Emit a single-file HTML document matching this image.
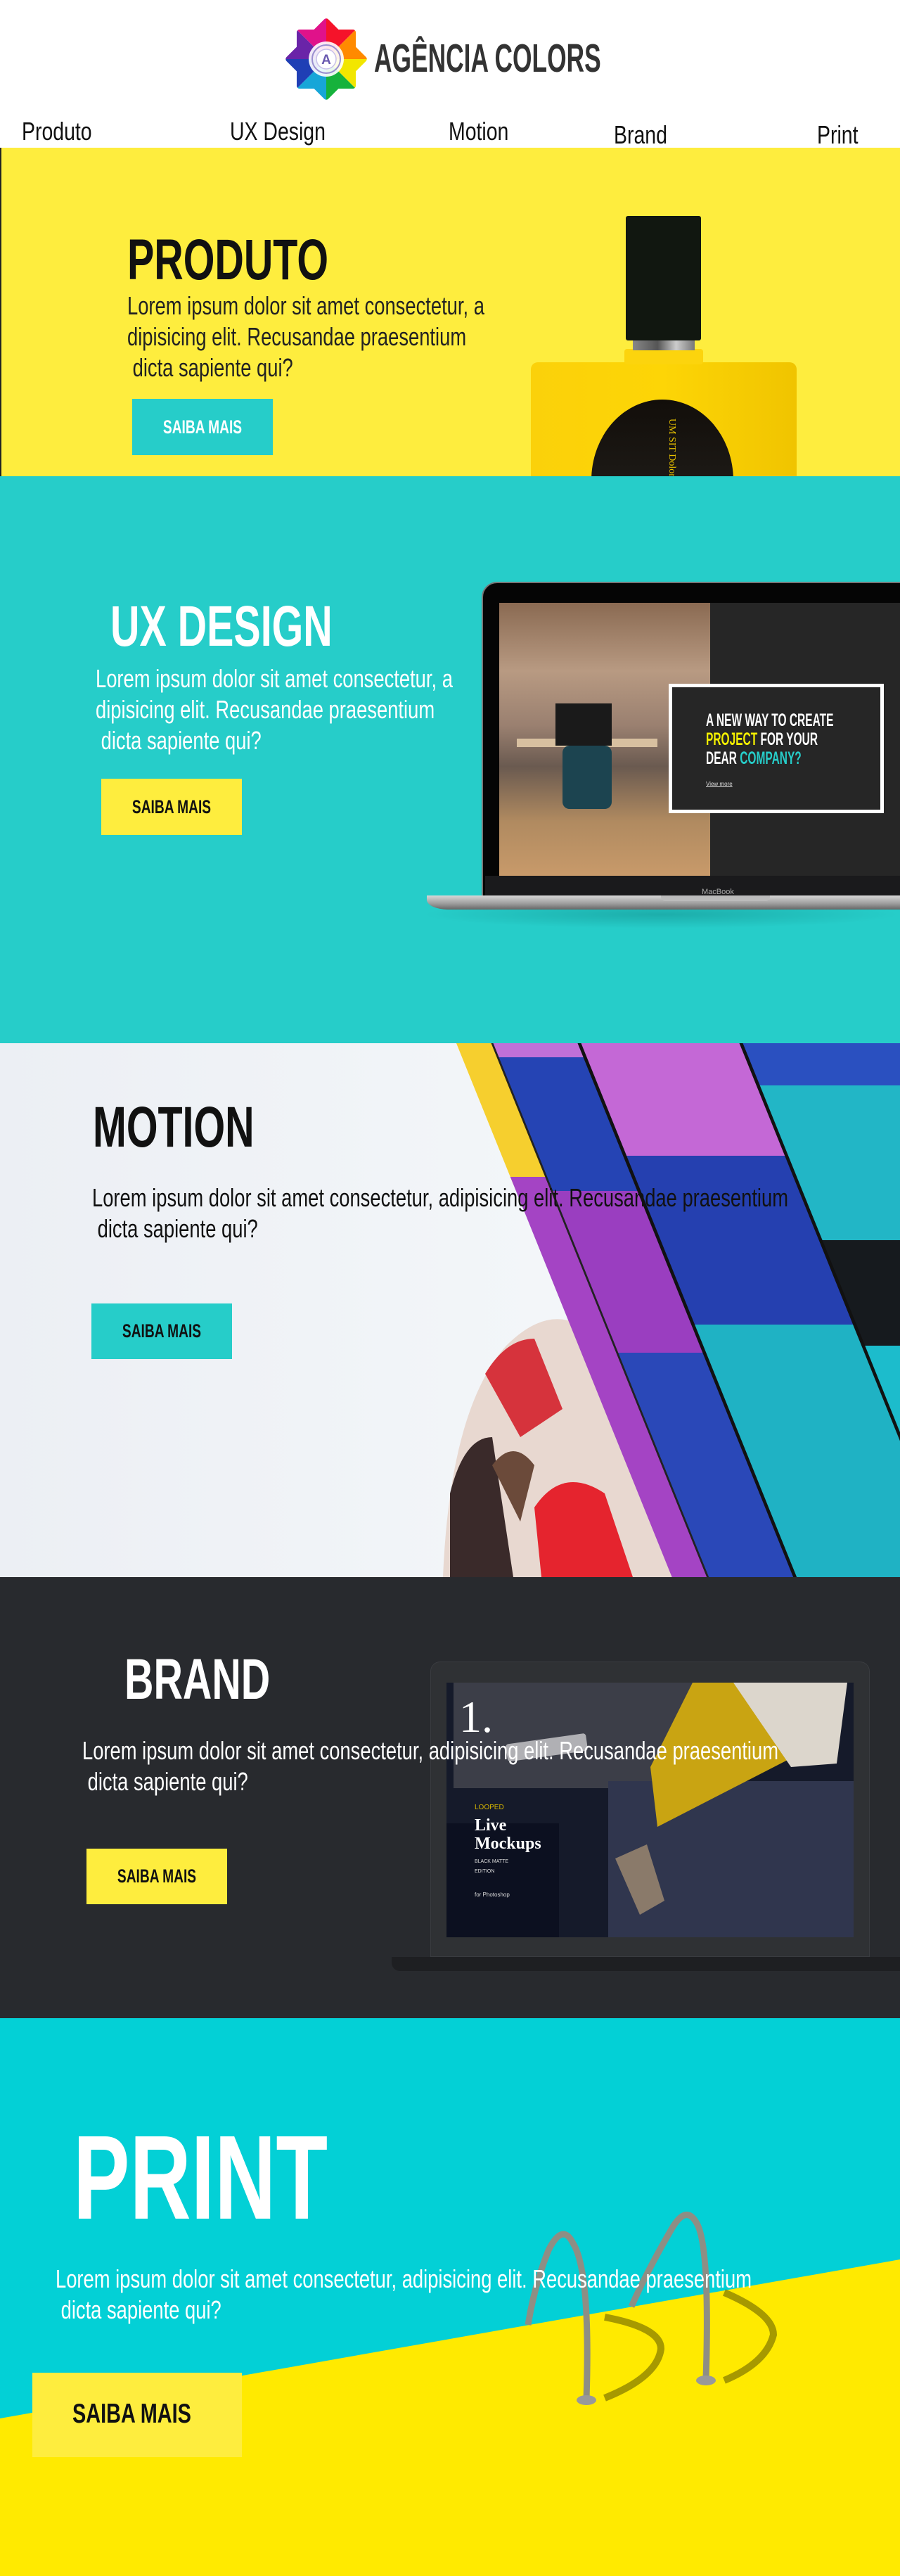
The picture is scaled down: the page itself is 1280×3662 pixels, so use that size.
<!DOCTYPE html>
<html><head><meta charset="utf-8">
<style>
*{margin:0;padding:0;box-sizing:border-box}
html,body{width:1280px;height:3662px;overflow:hidden;background:#fff}
body{position:relative;font-family:"Liberation Sans",sans-serif}
.a{position:absolute}
.t{position:absolute;white-space:pre;transform-origin:0 0}
.h{font-weight:bold;font-size:82px;line-height:82px;transform:scaleX(.7)}
.p{font-size:36px;line-height:44px;transform:scaleX(.76)}
.nav{font-size:36px;line-height:36px;transform:scaleX(.79);color:#111}
.btn{position:absolute;display:flex;align-items:center;justify-content:center}
.btn span{display:inline-block;font-weight:bold;font-size:27px;transform:scaleX(.71);white-space:pre}
</style></head><body>

<!-- header -->
<svg class="a" style="left:405px;top:25px" width="118" height="118" viewBox="-59 -59 118 118">
<defs><clipPath id="st"><rect x="-42" y="-42" width="84" height="84" rx="4"/><rect x="-42" y="-42" width="84" height="84" rx="4" transform="rotate(45)"/></clipPath></defs>
<g clip-path="url(#st)">
<polygon points="0,0 0,-70 50,-50" fill="#f5132a"/>
<polygon points="0,0 50,-50 70,0" fill="#ff8a00"/>
<polygon points="0,0 70,0 50,50" fill="#f2e600"/>
<polygon points="0,0 50,50 0,70" fill="#16b23c"/>
<polygon points="0,0 0,70 -50,50" fill="#17a6d8"/>
<polygon points="0,0 -50,50 -70,0" fill="#1f3fb5"/>
<polygon points="0,0 -70,0 -50,-50" fill="#6a24a8"/>
<polygon points="0,0 -50,-50 0,-70" fill="#e0128a"/>
</g>
<circle r="25" fill="#fff" opacity=".9"/><circle r="20" fill="none" stroke="#9a8fd0" stroke-width="2"/>
<circle r="14" fill="#fff" stroke="#c8c0ea" stroke-width="1.5"/>
<text x="0" y="7" text-anchor="middle" font-family="Liberation Sans" font-weight="bold" font-size="19" fill="#6a5ab0">A</text>
</svg>
<div class="t" style="left:532px;top:55px;font-size:57px;line-height:57px;font-weight:bold;color:#333;transform:scaleX(.62)">AGÊNCIA COLORS</div>

<div class="t nav" style="left:31px;top:169px">Produto</div>
<div class="t nav" style="left:327px;top:169px">UX Design</div>
<div class="t nav" style="left:638px;top:169px">Motion</div>
<div class="t nav" style="left:873px;top:174px">Brand</div>
<div class="t nav" style="left:1162px;top:174px">Print</div>

<!-- PRODUTO -->
<div class="a" style="left:0;top:210px;width:1280px;height:467px;background:#feed3e;border-left:2px solid #222"></div>
<div class="t h" style="left:181px;top:329px;color:#111">PRODUTO</div>
<div class="t p" style="left:181px;top:413px;color:#222">Lorem ipsum dolor sit amet consectetur, a
dipisicing elit. Recusandae praesentium
 dicta sapiente qui?</div>
<div class="btn" style="left:188px;top:567px;width:200px;height:80px;background:#26cdc9"><span style="color:#fff">SAIBA MAIS</span></div>
<!-- bottle -->
<div class="a" style="left:755px;top:515px;width:378px;height:162px;background:linear-gradient(90deg,#fbd10a,#fdd506 50%,#f0c400);border-radius:10px 10px 0 0"></div>
<div class="a" style="left:888px;top:496px;width:112px;height:22px;background:#fcd40d;border-radius:4px"></div>
<div class="a" style="left:900px;top:482px;width:88px;height:16px;background:linear-gradient(90deg,#888,#555 40%,#ccc 70%,#777)"></div>
<div class="a" style="left:890px;top:307px;width:107px;height:177px;background:#111710;border-radius:3px"></div>
<div class="a" style="left:841px;top:568px;width:202px;height:260px;background:linear-gradient(#120e0a,#2a2824);border-radius:101px 101px 0 0/115px 115px 0 0"></div>
<div class="t" style="left:963px;top:595px;font-family:'Liberation Serif',serif;font-size:14px;color:#e8c100;transform:rotate(90deg)">UM SIT Dolor</div>

<!-- UX DESIGN -->
<div class="a" style="left:0;top:677px;width:1280px;height:806px;background:#26cdc9"></div>
<div class="t h" style="left:157px;top:850px;color:#fff">UX DESIGN</div>
<div class="t p" style="left:136px;top:943px;color:#fff">Lorem ipsum dolor sit amet consectetur, a
dipisicing elit. Recusandae praesentium
 dicta sapiente qui?</div>
<div class="btn" style="left:144px;top:1107px;width:200px;height:80px;background:#feed3e"><span style="color:#111">SAIBA MAIS</span></div>
<!-- laptop -->
<div class="a" style="left:600px;top:1280px;width:680px;height:40px;background:radial-gradient(ellipse at center,rgba(0,80,80,.25),rgba(0,0,0,0) 70%)"></div>
<div class="a" style="left:685px;top:827px;width:600px;height:450px;background:#050505;border-radius:22px 0 0 0;border:2px solid #777"></div>
<div class="a" style="left:710px;top:857px;width:300px;height:388px;background:linear-gradient(180deg,#8a6a52 0%,#b89a82 25%,#9a8070 45%,#6a5a50 60%,#b08a60 80%,#c89a6a 100%)"></div>
<div class="a" style="left:735px;top:1050px;width:200px;height:12px;background:#d8c0a0"></div>
<div class="a" style="left:790px;top:1000px;width:80px;height:60px;background:#1a1a1a"></div>
<div class="a" style="left:800px;top:1060px;width:70px;height:90px;background:#1c4450;border-radius:10px"></div>
<div class="a" style="left:1010px;top:857px;width:275px;height:388px;background:#262626"></div>
<div class="a" style="left:951px;top:972px;width:306px;height:184px;background:#262626;border:5px solid #fff"></div>
<div class="t" style="left:1004px;top:1011px;font-weight:bold;font-size:25px;line-height:27px;color:#fff;transform:scaleX(.62)">A NEW WAY TO CREATE
<span style="color:#f4f000">PROJECT</span> FOR YOUR
DEAR <span style="color:#26cdc9">COMPANY?</span></div>
<div class="t" style="left:1004px;top:1110px;font-size:8px;color:#ddd;text-decoration:underline">View more</div>
<div class="a" style="left:690px;top:1245px;width:590px;height:28px;background:#1a1a1c"></div>
<div class="t" style="left:998px;top:1262px;font-size:11px;color:#aaa">MacBook</div>
<div class="a" style="left:607px;top:1273px;width:673px;height:20px;background:linear-gradient(#d8d8d8,#9a9a9a 60%,#666);border-radius:0 0 0 30px/0 0 0 14px"></div>
<div class="a" style="left:940px;top:1273px;width:155px;height:8px;background:#bbb;border-radius:0 0 6px 6px"></div>

<!-- MOTION -->
<div class="a" style="left:0;top:1483px;width:1280px;height:759px;background:linear-gradient(90deg,#eceff4,#f3f6f9 60%,#eef2f6)"></div>
<svg class="a" style="left:0;top:1483px" width="1280" height="759" viewBox="0 0 1280 759">
<defs><clipPath id="bc"><path d="M640 0 H1280 V759 H900 Q820 500 760 300 Q700 120 640 0Z"/></clipPath></defs>
<!-- cartoon balloon -->
<path d="M630 759 Q640 520 720 430 Q790 360 850 420 L1000 759Z" fill="#e8d8d0"/>
<path d="M690 470 Q720 420 760 420 L800 520 L740 560Z" fill="#d6333c"/>
<path d="M640 640 Q660 560 700 560 L730 759 H640Z" fill="#3a2a2a"/>
<path d="M760 660 Q800 600 860 640 L900 759 H770Z" fill="#e5242e"/>
<path d="M700 600 Q730 560 760 600 L740 680Z" fill="#6b4a3a"/>
<g clip-path="url(#bc)">
<g transform="skewX(22)">
<rect x="649" y="-20" width="51" height="220" fill="#f6cf2e"/>
<rect x="649" y="190" width="51" height="600" fill="#a444c4"/>
<rect x="700" y="-20" width="124" height="40" fill="#c070d8"/>
<rect x="700" y="20" width="124" height="190" fill="#2544b4"/>
<rect x="700" y="210" width="124" height="230" fill="#9a3ec0"/>
<rect x="700" y="440" width="124" height="340" fill="#2a48b8"/>
<rect x="824" y="-20" width="230" height="180" fill="#c468d6"/>
<rect x="824" y="160" width="230" height="240" fill="#2540b0"/>
<rect x="824" y="400" width="230" height="380" fill="#1fb2c4"/>
<rect x="1054" y="-20" width="300" height="80" fill="#2a50c0"/>
<rect x="1054" y="60" width="300" height="220" fill="#22b6c6"/>
<rect x="1054" y="280" width="300" height="150" fill="#161a1e"/>
<rect x="1054" y="430" width="300" height="300" fill="#1cbccc"/>
<rect x="1054" y="730" width="300" height="60" fill="#111"/>
<line x1="700" y1="-20" x2="700" y2="800" stroke="#222" stroke-width="3"/>
<line x1="824" y1="-20" x2="824" y2="800" stroke="#111" stroke-width="5"/>
<line x1="1054" y1="-20" x2="1054" y2="800" stroke="#111" stroke-width="5"/>
</g></g>
</svg>
<div class="t h" style="left:132px;top:1562px;color:#111">MOTION</div>
<div class="t p" style="left:131px;top:1681px;color:#111">Lorem ipsum dolor sit amet consectetur, adipisicing elit. Recusandae praesentium
 dicta sapiente qui?</div>
<div class="btn" style="left:130px;top:1853px;width:200px;height:79px;background:#26cdc9"><span style="color:#111">SAIBA MAIS</span></div>

<!-- BRAND -->
<div class="a" style="left:0;top:2242px;width:1280px;height:627px;background:#282a2e"></div>
<div class="a" style="left:612px;top:2362px;width:625px;height:420px;background:#2f3134;border-radius:14px 14px 0 0;border:1px solid #3a3c40"></div>
<svg class="a" style="left:635px;top:2392px" width="579" height="362" viewBox="0 0 579 362">
<rect width="579" height="362" fill="#151a2a"/>
<rect x="10" y="0" width="360" height="150" fill="#3c3e48"/>
<rect x="230" y="140" width="349" height="222" fill="#30364e"/>
<polygon points="350,0 412,0 485,110 300,205 290,120" fill="#c9a412"/>
<polygon points="408,0 570,0 555,115 490,120" fill="#dcd6cc"/>
<polygon points="240,250 285,230 310,310 275,330" fill="#8a7a6a"/>
<rect x="85" y="80" width="115" height="25" rx="4" fill="#b0b0b4" transform="rotate(-8 140 92)"/>
<rect x="0" y="200" width="160" height="162" fill="#0c1020"/>
<text x="18" y="70" font-family="Liberation Serif" font-size="64" fill="#fff">1.</text>
<text x="40" y="180" font-family="Liberation Sans" font-size="10" fill="#d4b400">LOOPED</text>
<text x="40" y="210" font-family="Liberation Serif" font-weight="bold" font-size="24" fill="#fff">Live</text>
<text x="40" y="236" font-family="Liberation Serif" font-weight="bold" font-size="24" fill="#fff">Mockups</text>
<text x="40" y="256" font-family="Liberation Sans" font-size="7" fill="#ddd">BLACK MATTE</text>
<text x="40" y="270" font-family="Liberation Sans" font-size="7" fill="#ddd">EDITION</text>
<text x="40" y="304" font-family="Liberation Sans" font-size="8" fill="#ddd">for Photoshop</text>
</svg>
<div class="a" style="left:557px;top:2782px;width:723px;height:20px;background:#1e1f22;border-radius:0 0 0 12px"></div>
<div class="t h" style="left:177px;top:2347px;color:#fff">BRAND</div>
<div class="t p" style="left:117px;top:2467px;color:#fff">Lorem ipsum dolor sit amet consectetur, adipisicing elit. Recusandae praesentium
 dicta sapiente qui?</div>
<div class="btn" style="left:123px;top:2628px;width:200px;height:79px;background:#feed3e"><span style="color:#111">SAIBA MAIS</span></div>

<!-- PRINT -->
<svg class="a" style="left:0;top:2869px" width="1280" height="793" viewBox="0 0 1280 793">
<rect width="1280" height="793" fill="#03d0d6"/>
<polygon points="0,569 1280,343 1280,793 0,793" fill="#ffea00"/>
<path d="M834 541 Q840 360 815 320 Q800 290 780 330 Q760 380 751 436" fill="none" stroke="#8e8e84" stroke-width="9"/>
<path d="M1004 513 Q1010 320 990 290 Q975 265 955 300 Q920 360 898 410" fill="none" stroke="#8e8e84" stroke-width="9"/>
<path d="M860 425 Q940 440 940 470 Q935 510 860 540" fill="none" stroke="#6a6200" stroke-width="10" opacity=".6"/>
<path d="M1030 390 Q1100 420 1100 450 Q1090 490 1030 515" fill="none" stroke="#6a6200" stroke-width="10" opacity=".6"/>
<ellipse cx="834" cy="543" rx="14" ry="7" fill="#999"/>
<ellipse cx="1004" cy="515" rx="14" ry="7" fill="#999"/>
</svg>
<div class="t h" style="left:104px;top:3011px;color:#fff;font-size:170px;line-height:170px;transform:scaleX(.71)">PRINT</div>
<div class="t p" style="left:79px;top:3218px;color:#fff">Lorem ipsum dolor sit amet consectetur, adipisicing elit. Recusandae praesentium
 dicta sapiente qui?</div>
<div class="a" style="left:46px;top:3373px;width:298px;height:120px;background:#feed3e"></div>
<div class="t" style="left:103px;top:3412px;font-weight:bold;font-size:39px;line-height:39px;color:#111;transform:scaleX(.74)">SAIBA MAIS</div>

</body></html>
